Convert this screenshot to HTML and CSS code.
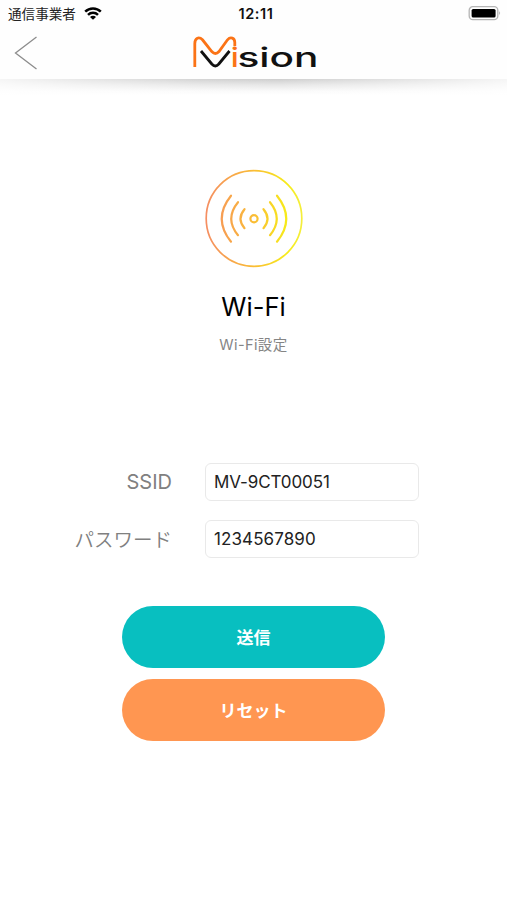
FILE: index.html
```html
<!DOCTYPE html>
<html lang="ja">
<head>
  <meta charset="UTF-8">
  <meta name="viewport" content="width=device-width, initial-scale=1.0">
  <title>Wi-Fi設定</title>
  <link rel="stylesheet" href="styles.css">
</head>
<body>

<!-- Header -->
<header class="header">
  <div class="status-bar">
    <div class="carrier">
      <span>通信事業者</span>
      <svg class="wifi-icon" width="18" height="14" viewBox="0 0 18 14" fill="none" stroke="#000" stroke-width="2.5">
        <path d="M1.2 4.7C5.5 0.4 12.5 0.4 16.8 4.7" />
        <path d="M4 7.8C6.8 5.1 11.2 5.1 14 7.8" />
        <path d="M6 9.9C7.6 8.3 10.4 8.3 12 9.9L9 12.7Z" fill="#000" stroke="none" />
      </svg>
    </div>
    <span class="clock">12:11</span>
    <svg class="battery" width="34" height="16" viewBox="0 0 34 16">
      <rect x="1.2" y="0.7" width="28.6" height="13" rx="3.6" fill="#fff" stroke="#b5b5b5" stroke-width="1.3" />
      <rect x="3.6" y="2.9" width="24" height="8.6" rx="1.6" fill="#000" />
      <path d="M31.3 5.1Q33 7.2 31.3 9.3Z" fill="#999" />
    </svg>
  </div>

  <div class="nav-bar">
    <a class="back" href="#" aria-label="戻る">
      <svg width="24" height="36" viewBox="0 0 24 36" fill="none" stroke="#8c8c8c" stroke-width="1.3">
        <path d="M22.5 2L1.5 18L22.5 34" />
      </svg>
    </a>
    <svg class="logo" width="132" height="40" viewBox="0 0 132 40" fill="none">
      <path d="M3.8 33V9.5C3.8 3.8 8 2.3 11.5 5.8L20.8 17.5Q24.4 21.5 28 17.5L36.5 5.8C39.5 2.3 43.8 3.8 43.8 8.5V12" stroke="#fb7316" stroke-width="2.8" />
      <path d="M10 17L20.8 30Q24.3 34 27.8 30L38.5 17" stroke="#111" stroke-width="2.8" />
      <text x="39.8" y="33" class="logo-text logo-accent" textLength="8" lengthAdjust="spacingAndGlyphs">i</text>
      <text x="46.5" y="33" class="logo-text" textLength="81" lengthAdjust="spacingAndGlyphs">sion</text>
    </svg>
  </div>
</header>
<div class="header-shadow"></div>

<main class="content">
  <svg class="wifi-logo" width="98" height="98" viewBox="0 0 98 98" fill="none" stroke="url(#warm)" stroke-width="2.2" stroke-linecap="round">
    <defs>
      <linearGradient id="warm" gradientUnits="userSpaceOnUse" x1="1" y1="0" x2="97" y2="0">
        <stop offset="0" stop-color="#f58e62" />
        <stop offset="0.5" stop-color="#fabd35" />
        <stop offset="0.85" stop-color="#f6ec19" />
        <stop offset="1" stop-color="#f4ee3c" />
      </linearGradient>
    </defs>
    <circle cx="49" cy="48.5" r="47.8" stroke-width="1.7" />
    <circle cx="49" cy="48.7" r="3.6" />
    <path d="M39.5 39.2Q31.5 48.7 39.5 58.2M33 32.2Q19.5 48.7 33 65.2M26 25.7Q7.5 48.7 26 71.7" />
    <path d="M58.5 39.2Q66.5 48.7 58.5 58.2M65 32.2Q78.5 48.7 65 65.2M72 25.7Q90.5 48.7 72 71.7" />
  </svg>
  <h1>Wi-Fi</h1>
  <p class="subtitle">Wi-Fi設定</p>

  <!-- Wi-Fi Form -->
  <form class="wifi-form">
    <div class="fields">
      <label for="ssid">SSID</label>
      <input type="text" id="ssid" value="MV-9CT00051">
      <label for="password" class="kana">パスワード</label>
      <input type="text" id="password" value="1234567890">
    </div>
    <button type="submit" class="btn btn-send">送信</button>
    <button type="reset" class="btn btn-reset">リセット</button>
  </form>
</main>

</body>
</html>
```

FILE: styles.css
```css
/* General Styles */
* {
  box-sizing: border-box;
}

body {
  margin: 0;
  min-height: 100vh;
  background: #fff;
  color: #111;
  font-family: Inter, "Noto Sans CJK JP", sans-serif;
}

svg {
  display: block;
}

/* Header */
.header {
  height: 79px;
  background: #fefefe;
}

.status-bar {
  display: grid;
  grid-template-columns: 1fr auto 1fr;
  align-items: center;
  height: 28px;
  padding: 0 5px 0 8px;
}

.carrier {
  display: flex;
  align-items: center;
  gap: 8px;
  font-size: 13.6px;
  line-height: 20px;
  color: #222;
}

.clock {
  font-size: 14.5px;
  line-height: 18px;
  font-weight: 600;
  letter-spacing: 0.6px;
  color: #111;
  padding-left: 2px;
}

.battery {
  justify-self: end;
}

.nav-bar {
  display: grid;
  grid-template-columns: 1fr 132px 1fr;
  padding: 6px 0 0 14px;
}

.back {
  padding-top: 1px;
}

.logo {
  margin-left: -4px;
  overflow: visible;
}

.logo-text {
  font-size: 27px;
  font-weight: 500;
  fill: #111;
}

.logo-accent {
  fill: #fb7316;
}

.header-shadow {
  height: 16px;
  background:
    linear-gradient(to right, rgba(255, 255, 255, 0.8), rgba(255, 255, 255, 0.1) 40%, rgba(255, 255, 255, 0) 55%, rgba(255, 255, 255, 0.8)),
    linear-gradient(#cecece, #e6e6e6 35%, #fafafa 75%, #fff);
}

/* Content */
.content {
  display: flex;
  flex-direction: column;
  align-items: center;
  padding-top: 75px;
}

.wifi-logo {
  margin-left: 1px;
  overflow: visible;
}

h1 {
  margin: 22px 0 0;
  font-size: 25.5px;
  line-height: 34px;
  font-weight: 400;
  color: #000;
}

.subtitle {
  margin: 11px 0 0;
  font-size: 14.5px;
  line-height: 20px;
  letter-spacing: 0.4px;
  color: #858585;
}

/* Form */
.wifi-form {
  display: flex;
  flex-direction: column;
  align-items: center;
  width: 100%;
  margin-top: 108px;
}

.fields {
  display: grid;
  grid-template-columns: 172px 214px;
  column-gap: 33px;
  row-gap: 19px;
  align-self: flex-start;
  align-items: center;
  margin-bottom: 48px;
}

.fields label {
  text-align: right;
  font-size: 20px;
  line-height: 28px;
  color: #808080;
}

.fields .kana {
  padding-top: 2px;
  font-size: 19.5px;
  font-weight: 350;
}

.fields input {
  width: 214px;
  height: 38px;
  padding: 0 8px;
  border: 1px solid #e9e9e9;
  border-radius: 6px;
  background: #fff;
  font-family: inherit;
  font-size: 17px;
  color: #222;
}

#ssid {
  letter-spacing: -0.1px;
}

#password {
  letter-spacing: 0.1px;
}

/* Buttons */
.btn {
  width: 263px;
  height: 62px;
  padding: 0 0 2px;
  border: none;
  border-radius: 31px;
  color: #fff;
  font-family: inherit;
  font-size: 17px;
  font-weight: 600;
}

.btn-send {
  background: #08bfc0;
}

.btn-reset {
  margin-top: 11px;
  background: #ff9651;
}
```
